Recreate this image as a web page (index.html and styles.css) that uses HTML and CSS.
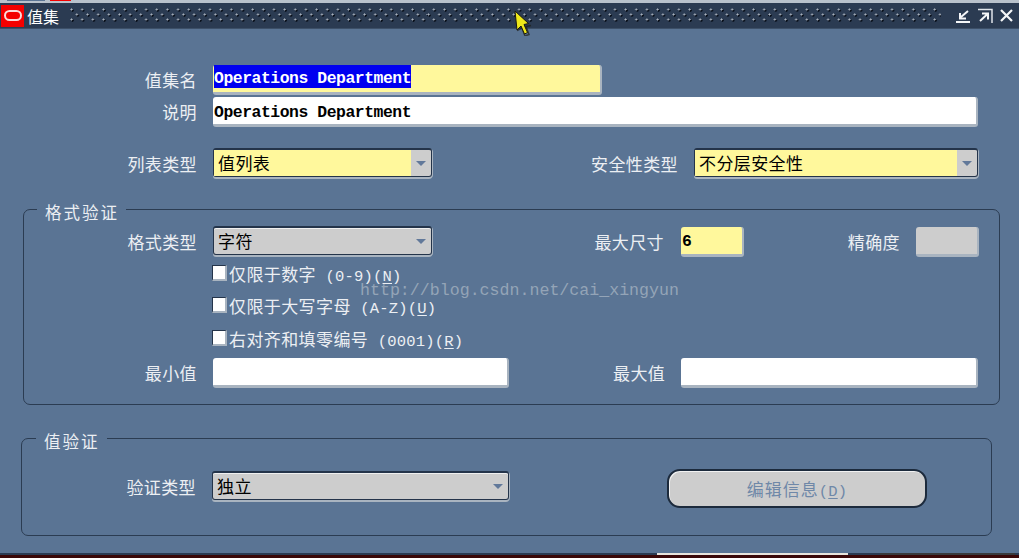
FILE: index.html
```html
<!DOCTYPE html>
<html lang="zh">
<head>
<meta charset="utf-8">
<title>值集</title>
<link rel="stylesheet" href="styles.css">
</head>
<body>
<div class="window">
  <div class="topstrip"><i class="tab tab-blue"></i><i class="tab tab-red"></i></div>
  <header class="titlebar">
    <span class="logo"><span class="logo-o"></span></span>
    <span class="title">值集</span>
    <span class="grip"></span>
    <span class="winbtns">
      <svg width="16" height="16" viewBox="0 0 16 16"><path d="M1 14H15" stroke="#f4f6f8" stroke-width="2"/><path d="M13 3L6 9M5 5V10.500H11" fill="none" stroke="#f4f6f8" stroke-width="2"/></svg>
      <svg width="16" height="16" viewBox="0 0 16 16"><path d="M1 1.500H15V15" fill="none" stroke="#dfe4ea" stroke-width="1.500"/><path d="M3 13L10 6.500M5 5.500H11V11.500" fill="none" stroke="#f4f6f8" stroke-width="2"/></svg>
      <svg width="15" height="15" viewBox="0 0 15 15"><path d="M2 2L13 13M13 2L2 13" stroke="#f4f6f8" stroke-width="2.200"/></svg>
    </span>
  </header>
  <main class="content">
    <div class="row row-name">
      <label class="lab w-main">值集名</label>
      <div class="field req f-name mono"><span class="sel">Operations Department</span></div>
    </div>
    <div class="row row-desc">
      <label class="lab w-main">说明</label>
      <div class="field f-desc mono">Operations Department</div>
    </div>
    <div class="row row-type">
      <label class="lab w-main">列表类型</label>
      <div class="combo req f-list"><span class="val">值列表</span><span class="arrowbox"><i class="arrow"></i></span></div>
      <label class="lab lab-sec">安全性类型</label>
      <div class="combo req f-sec"><span class="val">不分层安全性</span><span class="arrowbox"><i class="arrow"></i></span></div>
    </div>
    <section class="group group-format">
      <h2 class="legend">格式验证</h2>
      <div class="row row-fmt">
        <label class="lab w-fmt">格式类型</label>
        <div class="combo gray f-list"><span class="val">字符</span><span class="arrowbox"><i class="arrow"></i></span></div>
        <label class="lab lab-size">最大尺寸</label>
        <div class="field req f-size mono">6</div>
        <label class="lab lab-prec">精确度</label>
        <div class="field gray-field f-prec"></div>
      </div>
      <div class="check c1"><i class="box"></i><span>仅限于数字<span class="latin"> (0-9)(<u>N</u>)</span></span></div>
      <div class="check c2"><i class="box"></i><span>仅限于大写字母<span class="latin"> (A-Z)(<u>U</u>)</span></span></div>
      <div class="check c3"><i class="box"></i><span>右对齐和填零编号<span class="latin"> (0001)(<u>R</u>)</span></span></div>
      <div class="row row-min">
        <label class="lab w-fmt">最小值</label>
        <div class="field f-min"></div>
        <label class="lab lab-maxv">最大值</label>
        <div class="field f-max"></div>
      </div>
    </section>
    <section class="group group-val">
      <h2 class="legend">值验证</h2>
      <div class="row row-val">
        <label class="lab w-val">验证类型</label>
        <div class="combo gray f-valtype"><span class="val">独立</span><span class="arrowbox"><i class="arrow"></i></span></div>
        <button class="btn" type="button">编辑信息<span class="latin">(<u>D</u>)</span></button>
      </div>
    </section>
  </main>
  <div class="bottomstrip"><i class="seg seg-a"></i><i class="seg seg-b"></i><i class="seg seg-c"></i><i class="seg seg-d"></i></div>
  <div class="watermark">http://blog.csdn.net/cai_xingyun</div>
  <svg class="cursor" width="18" height="26" viewBox="0 0 18 26"><path d="M3 20.500L8 18L11 26L15 24.500L12 16.500L17 15.500" fill="none" stroke="#20201a" stroke-width="1.500" opacity="0.700"/><path d="M1 1L3 20L7 16L10.500 24L13.500 22.500L10 14.500L14.500 13.500Z" fill="#eee81a" stroke="#1a1a10" stroke-width="1"/></svg>
</div>
</body>
</html>
```
FILE: styles.css
```css
* { box-sizing: border-box; }
html, body { margin: 0; padding: 0; }
body { width: 1019px; height: 558px; overflow: hidden; background: #5a7494; }
.window {
  position: relative; width: 1019px; height: 558px; display: flex; flex-direction: column;
  background: #5a7494; color: #eceff3;
  font-family: "Noto Sans CJK SC", "Liberation Sans", sans-serif; font-size: 17px; letter-spacing: 0.4px;
}
.topstrip { height: 3px; background: #b9c2cc; flex: none; display: flex; align-items: flex-start; }
.tab { height: 1px; display: block; }
.tab-blue { width: 38px; margin-left: 7px; background: #5a7494; }
.tab-red { width: 21px; margin-left: 5px; background: #f40000; }
.titlebar {
  flex: none; height: 26px; background: #2b3b52; display: flex; align-items: center;
  border-bottom: 1px solid #3d5068;
}
.logo { width: 23px; height: 22px; margin-left: 1px; background: #f40000; display: flex; align-items: center; justify-content: center; flex: none; }
.logo-o { width: 18px; height: 11px; border: 2.5px solid #fbdcdc; border-radius: 6px; }
.title { color: #fff; margin-left: 3px; width: 43px; flex: none; line-height: 20px; font-size: 16px; letter-spacing: 0; }
.grip {
  flex: 1; height: 15px; margin-right: 14px;
  background-image:
    radial-gradient(circle at 1.500px 1.500px, #aab3bf 0.8px, transparent 1.300px),
    radial-gradient(circle at 1.500px 1.500px, #aab3bf 0.8px, transparent 1.300px),
    radial-gradient(circle at 1.500px 1.500px, #0a111c 1px, transparent 1.500px),
    radial-gradient(circle at 1.500px 1.500px, #0a111c 1px, transparent 1.500px);
  background-size: 10.67px 10px;
  background-position: 0 0, 5.330px 5px, 1px 1px, 6.330px 6px;
}
.winbtns { display: flex; align-items: center; gap: 6px; margin-right: 5px; flex: none; }
.content { flex: 1; display: flex; flex-direction: column; min-height: 0; }
.row { display: flex; align-items: center; }
.lab { flex: none; text-align: right; line-height: 22px; white-space: nowrap; letter-spacing: 0.4px; }
.w-main { width: 197px; margin-right: 16px; }
.row-name { margin-top: 36px; height: 30px; }
.row-desc { margin-top: 2px; height: 30px; }
.row-type { margin-top: 21px; height: 31px; }
.field {
  flex: none; background: #fff; height: 30px; border-radius: 3px; color: #000;
  border-right: 2px solid #a9b4c0; border-bottom: 3px solid #a9b4c0;
  display: flex; align-items: center;
}
.req { background: #fff89c; }
.mono { font-family: "Liberation Mono", monospace; font-weight: 700; font-size: 16.4px; letter-spacing: -0.45px; white-space: nowrap; }
.f-name { width: 389px; align-items: flex-start; padding-left: 1px; }
.sel { background: #0000f0; color: #fff; width: 197px; display: block; line-height: 27px; height: 23px; overflow: hidden; }
.f-desc { width: 765px; padding: 3px 0 0 1px; }
.f-size { width: 63px; padding: 2px 0 0 1px; }
.gray-field { background: #cdcdcd; }
.f-prec { width: 63px; }
.combo {
  flex: none; display: flex; align-items: center; height: 29px; color: #000;
  border: 1px solid #24344a; border-top-width: 2px;
  box-shadow: 0 2px 0 #a9b4c0, 1px 1px 0 #a9b4c0; border-radius: 3px; background: #cdcdcd;
  margin-bottom: 2px;
}
.combo.gray { box-shadow: 0 2px 0 #a9b4c0, 1px 1px 0 #a9b4c0, inset 0 1px 0 #f0f0f0; }
.combo .val { flex: 1; padding-left: 4px; line-height: 24px; height: 100%; display: flex; align-items: center; }
.combo.req .val { background: #fff89c; }
.arrowbox { width: 20px; height: 100%; display: flex; align-items: center; justify-content: center; flex: none; }
.arrow { width: 0; height: 0; border-left: 5px solid transparent; border-right: 5px solid transparent; border-top: 5px solid #62799a; }
.f-list { width: 219px; }
.lab-sec { margin-left: 158px; width: 88px; margin-right: 16px; }
.f-sec { width: 284px; }
.group { flex: none; position: relative; border: 1px solid #2b3c52; border-radius: 7px; }
.group-format { margin: 30px 19px 0 23px; width: 977px; height: 196px; }
.group-val { margin: 33px 0 0 21px; width: 971px; height: 98px; }
.legend {
  position: absolute; top: -8px; margin: 0; background: #5a7494; font-weight: 400;
  font-size: 16.5px; line-height: 20px; letter-spacing: 2px; padding: 0 7px 0 8px; white-space: nowrap;
}
.group-format .legend { left: 13px; }
.group-val .legend { left: 14px; letter-spacing: 2px; }
.row-fmt { height: 31px; margin-top: 16px; }
.w-fmt { width: 173px; margin-right: 16px; }
.lab-size { margin-left: 162px; width: 70px; margin-right: 17px; }
.lab-prec { margin-left: 103px; width: 53px; margin-right: 16px; }
.check { display: flex; align-items: center; height: 22px; margin-left: 188px; white-space: nowrap; }
.check > span { margin-left: 2px; line-height: 22px; }
.latin { font-family: "Liberation Mono", monospace; font-size: 15.500px; letter-spacing: 0.2px; }
.check u, .btn u { text-underline-offset: 2px; }
.c1 { margin-top: 7px; }
.c2 { margin-top: 10px; }
.c3 { margin-top: 11px; }
.box { width: 15px; height: 16px; background: #fff; border-top: 1px solid #24344a; border-left: 1px solid #24344a; border-right: 2px solid #a9b4c0; border-bottom: 2px solid #a9b4c0; flex: none; margin-top: -4px; }
.row-min { margin-top: 7px; height: 30px; }
.f-min { width: 296px; }
.lab-maxv { margin-left: 104px; width: 52px; margin-right: 16px; }
.f-max { width: 297px; }
.row-val { margin-top: 30px; height: 39px; }
.w-val { width: 174px; margin-right: 16px; margin-bottom: 4px; }
.f-valtype { width: 297px; margin-bottom: 6px; }
.btn {
  margin-left: 158px; width: 260px; height: 39px; background: #cdcdcd; color: #6f88a8;
  border: 2px solid #1c2a3c; border-radius: 13px; font: inherit; letter-spacing: 1px; padding: 0;
  box-shadow: inset 1px 1px 0 #f2f2f2;
}
.bottomstrip { flex: none; height: 5px; background: linear-gradient(#2b3b52 0 2px, #3a0808 2px); display: flex; align-items: flex-start; }
.seg { display: block; height: 2px; }
.seg-a { width: 657px; }
.seg-b { width: 191px; background: #e8e4dc; }
.seg-c { width: 32px; }
.seg-d { width: 135px; background: #3a3a3c; }
.watermark {
  position: absolute; left: 360px; top: 281px; font-family: "Liberation Mono", monospace;
  font-size: 16.620px; letter-spacing: 0; color: #94a4b7; white-space: nowrap; line-height: 20px;
}
.cursor { position: absolute; left: 514px; top: 10px; }
```
